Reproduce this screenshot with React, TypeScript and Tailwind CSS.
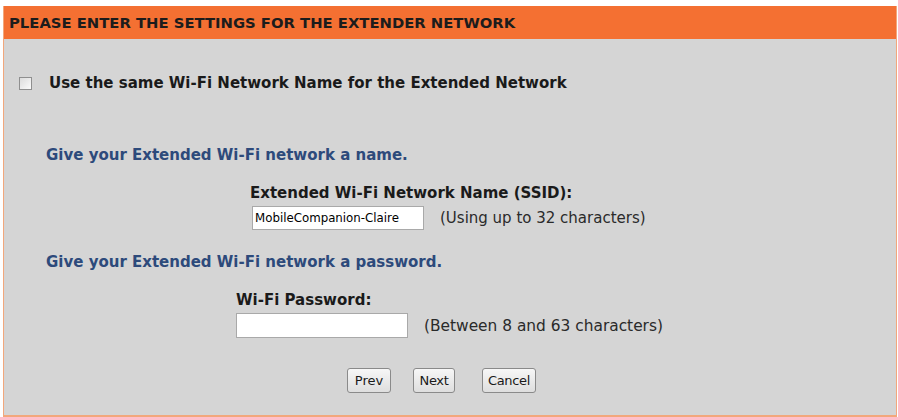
export default function App() {
  const font = { fontFamily: "Tahoma, 'DejaVu Sans', Verdana, sans-serif" };
  return (
    <div className="bg-white pt-[6px] pl-[3px] w-[898px] h-[417px]" style={font}>
      <div className="w-[894px] h-[411px] border-x border-b-2 border-[#f2a77c] bg-[#d5d5d5] flex flex-col">
        {/* title bar */}
        <div className="h-[33px] bg-[#f47032] flex items-center pl-[5px]">
          <h1 className="text-[14.8px] font-bold uppercase text-[#1c1c1c] leading-[18px]">
            Please enter the settings for the extender network
          </h1>
        </div>

        {/* same name checkbox */}
        <label className="mt-[35px] ml-[15px] flex items-center gap-[17px] h-[18px]">
          <span className="w-[13px] h-[13px] border border-[#8f8f8f] bg-gradient-to-br from-[#dcdcdc] to-[#fbfbfb]" />
          <span className="text-[15px] font-bold text-[#1a1a1a] leading-[18px]">
            Use the same Wi-Fi Network Name for the Extended Network
          </span>
        </label>

        {/* ssid */}
        <p className="mt-[54px] ml-[42px] text-[15px] font-bold text-[#2d4a7b] leading-[18px]">
          Give your Extended Wi-Fi network a name.
        </p>
        <div className="mt-[20px] ml-[246px] flex flex-col">
          <span className="text-[15px] font-bold text-[#1a1a1a] leading-[18px]">
            Extended Wi-Fi Network Name (SSID):
          </span>
          <div className="mt-[4px] h-[24px] flex items-center">
            <input
              defaultValue="MobileCompanion-Claire"
              className="ml-[2px] w-[172px] h-[24px] bg-white border border-[#a9a9a9] px-[2px] text-[11.8px] text-black outline-none"
              style={font}
            />
            <span className="ml-[16px] text-[15px] text-[#2a2a2a] leading-[18px]">(Using up to 32 characters)</span>
          </div>
        </div>

        {/* password */}
        <p className="mt-[23px] ml-[42px] text-[15px] font-bold text-[#2d4a7b] leading-[18px]">
          Give your Extended Wi-Fi network a password.
        </p>
        <div className="mt-[20px] ml-[232px] flex flex-col">
          <span className="text-[15px] font-bold text-[#1a1a1a] leading-[18px]">Wi-Fi Password:</span>
          <div className="mt-[4px] h-[25px] flex items-center">
            <input
              type="password"
              className="w-[172px] h-[25px] bg-white border border-[#a9a9a9] outline-none"
            />
            <span className="ml-[16px] text-[15.4px] text-[#2a2a2a] leading-[18px]">(Between 8 and 63 characters)</span>
          </div>
        </div>

        {/* buttons */}
        <div className="mt-[30px] ml-[343px] flex">
          <button
            className="w-[44px] h-[25px] rounded-[3px] border border-[#8a8a8a] bg-gradient-to-b from-[#f7f7f7] to-[#dedede] text-[13px] text-[#1a1a1a]"
            style={font}
          >
            Prev
          </button>
          <button
            className="ml-[22px] w-[42px] h-[25px] rounded-[3px] border border-[#8a8a8a] bg-gradient-to-b from-[#f7f7f7] to-[#dedede] text-[13px] text-[#1a1a1a] tracking-[-0.3px]"
            style={font}
          >
            Next
          </button>
          <button
            className="ml-[27px] w-[54px] h-[25px] rounded-[3px] border border-[#8a8a8a] bg-gradient-to-b from-[#f7f7f7] to-[#dedede] text-[13px] text-[#1a1a1a] tracking-[-0.3px]"
            style={font}
          >
            Cancel
          </button>
        </div>
      </div>
    </div>
  );
}
